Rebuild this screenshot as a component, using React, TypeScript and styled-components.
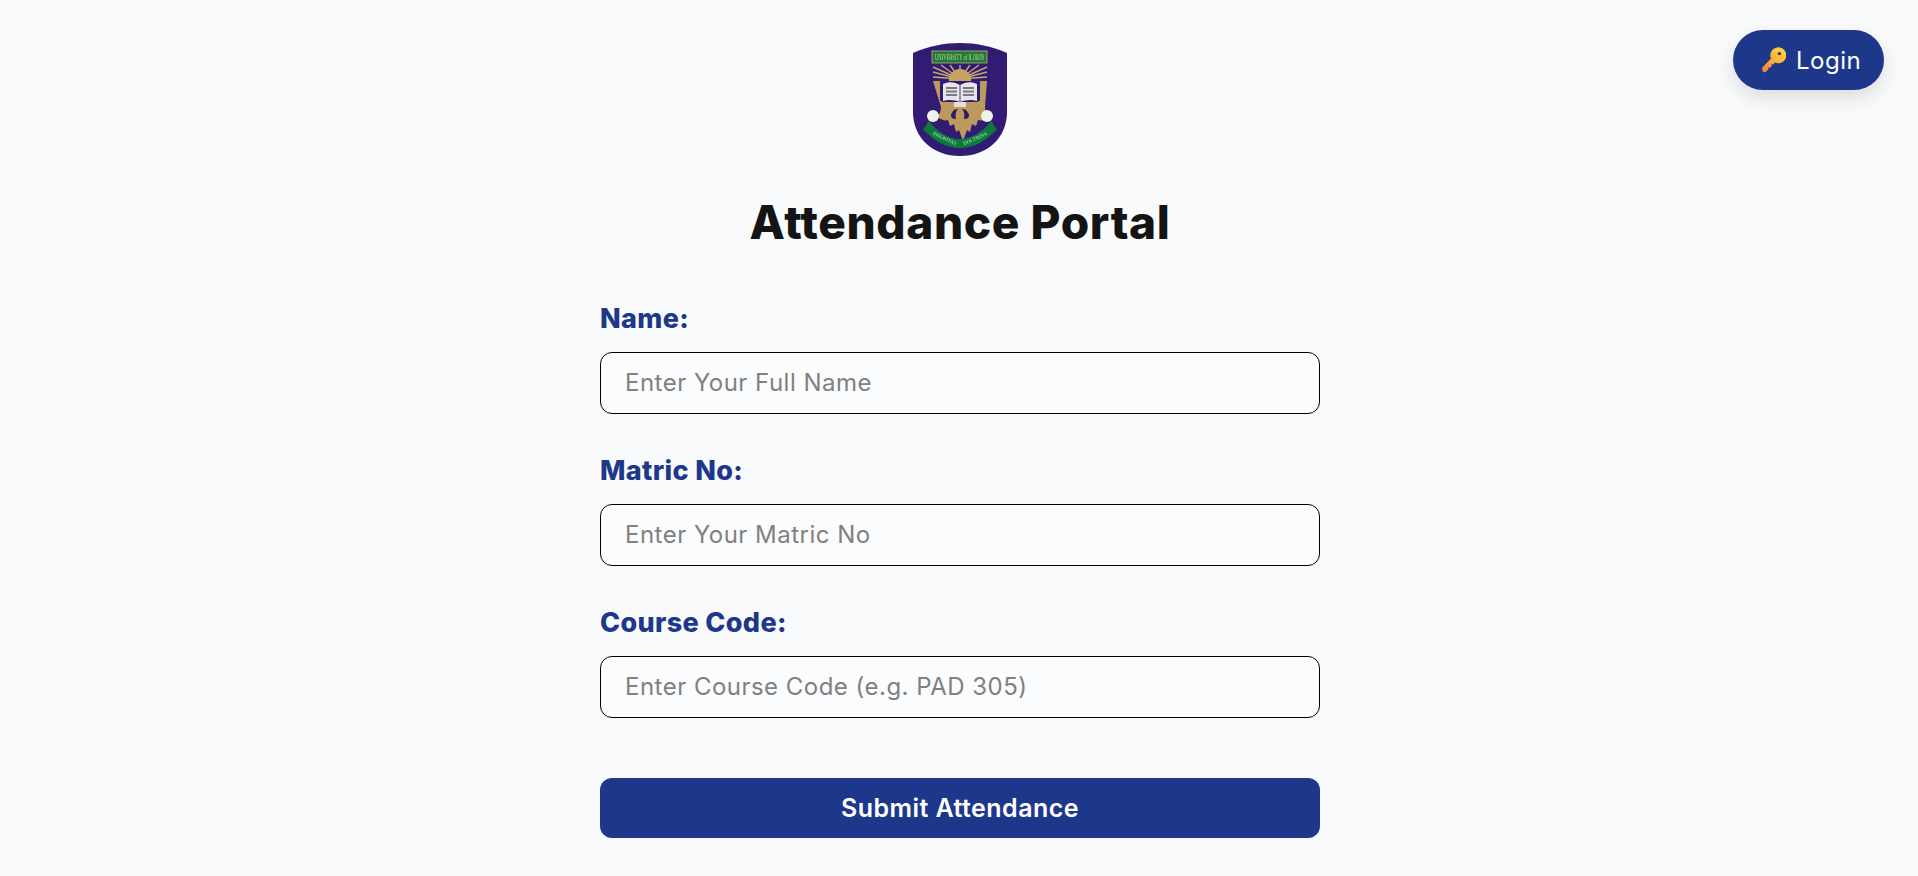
import React from "react";
import styled, { createGlobalStyle } from "styled-components";

const Global = createGlobalStyle`
  html, body { margin: 0; padding: 0; background: #f9fafc; }
  body { font-family: Inter, "Liberation Sans", sans-serif; }
  * { box-sizing: border-box; }
`;

const Page = styled.main`
  position: relative;
  height: 876px;
  overflow: hidden;
  display: flex;
  flex-direction: column;
  align-items: center;
  padding: 43px 0 0 2px;
`;

const LoginButton = styled.button`
  position: absolute;
  top: 30px;
  right: 34px;
  width: 151px;
  height: 60px;
  padding: 0 0 0 27px;
  display: flex;
  align-items: center;
  justify-content: flex-start;
  gap: 10px;
  border: 0;
  border-radius: 30px;
  background: #1d378b;
  color: #fff;
  font: 400 24px Inter, sans-serif;
  letter-spacing: 0.5px;
  box-shadow: 0 8px 20px rgba(0, 0, 0, 0.12);
`;

const Title = styled.h1`
  margin: 32px 0 0;
  height: 68px;
  line-height: 68px;
  font-size: 46px;
  font-weight: 800;
  color: #141414;
  letter-spacing: 0.6px;
`;

const Form = styled.form`
  width: 720px;
  display: flex;
  flex-direction: column;
  margin-top: 48px;
`;

const Field = styled.div`
  display: flex;
  flex-direction: column;
  gap: 18px;
  margin-bottom: 42px;
`;

const Label = styled.label`
  height: 30px;
  line-height: 30px;
  font-size: 27px;
  font-weight: 800;
  letter-spacing: 0.35px;
  color: #1d378b;
`;

const Input = styled.input`
  width: 720px;
  height: 62px;
  padding: 0 24px 2px;
  border: 1px solid #000;
  border-radius: 12px;
  background: #fbfcfe;
  font: 400 24px Inter, sans-serif;
  letter-spacing: 0.48px;
  outline: none;
  &::placeholder { color: #808080; opacity: 1; }
`;

const Submit = styled.button`
  margin-top: 18px;
  height: 60px;
  border: 0;
  border-radius: 12px;
  background: #1d378b;
  color: #fff;
  font: 600 25px Inter, sans-serif;
  letter-spacing: 0.45px;
`;

const KeyIcon = () => (
  <svg width="26" height="26" viewBox="0 0 26 26" aria-hidden="true">
    <defs>
      <linearGradient id="keyGrad" x1="1" y1="25" x2="24" y2="2" gradientUnits="userSpaceOnUse">
        <stop offset="0" stopColor="#f07f3c" />
        <stop offset="0.6" stopColor="#fcb53a" />
        <stop offset="1" stopColor="#ffd43b" />
      </linearGradient>
    </defs>
    <path
      d="M1.4 21.5 11 11.6a8 8 0 1 1 4 4l-2 2-1.6-.4.2 2-1.6 1.6-1.8-.4.2 1.9-2.2 2.2c-1 .9-2.2 1-3.2.2-1-1-1-2 0-3z"
      fill="url(#keyGrad)"
    />
    <circle cx="19.4" cy="6.6" r="1.7" fill="#1d378b" />
  </svg>
);

const Crest = () => (
  <svg width="94" height="113" viewBox="0 0 94 113" aria-hidden="true">
    <defs>
      <filter id="soft" x="-5%" y="-5%" width="110%" height="110%">
        <feGaussianBlur stdDeviation="0.35" />
      </filter>
    </defs>
    <g filter="url(#soft)">
      <path d="M0 10C16 3 31 0 47 0s31 3 47 10v59c0 26-20 44-47 44S0 95 0 69z" fill="#331a73" />
      <rect x="19" y="8" width="55" height="12" fill="#1a7a3a" stroke="#c2b070" strokeWidth="0.8" />
      <text transform="translate(46.5 17) scale(1 1.6)" textAnchor="middle" fontFamily="'Liberation Serif', serif" fontSize="4.6" fill="#d9d58c">
        UNIVERSITY of ILORIN
      </text>
      <g stroke="#c2a86c" strokeWidth="1.5">
        <path d="M47 36 20 24M47 36 20 29M47 36 20 34M47 36 28 22M47 36 37 22M47 36V22M47 36 57 22M47 36 66 22M47 36 74 24M47 36 74 29M47 36 74 34" />
      </g>
      <circle cx="47" cy="37" r="11" fill="#c8a460" />
      <path d="M20 38h7l2 21h36l2-21h7l-2 26c0 5 2 8 4 10-5 3-8 4-11 3l-2 6-4-2-2 8-3-2-4 11-4-11-3 2-2-8-4 2-2-6c-3 1-6 0-11-3 2-2 4-5 4-10z" fill="#bb9a5c" />
      <path d="M27 38h40v20H27z" fill="#2d1a72" />
      <path d="M30 41c6-3 12-2 17 1 5-3 11-4 17-1v17c-6-2-12-1-17 1-5-2-11-3-17-1z" fill="#e6e6e8" />
      <path d="M33 45h11M33 48.5h11M33 52h11M50 45h11M50 48.5h11M50 52h11" stroke="#7b7882" strokeWidth="1.8" />
      <path d="M47 42v17" stroke="#3a3358" strokeWidth="0.9" />
      <path d="M41 59h12v5H41z" fill="#e4e1d9" />
      <path d="M38 72c1-4 4-6 7-6-2 2-3 5-2 10-3 0-5-1-5-4zM56 72c-1-4-4-6-7-6 2 2 3 5 2 10 3 0 5-1 5-4z" fill="#2a1a66" />
      <ellipse cx="20" cy="73" rx="6" ry="6" fill="#eef0ea" />
      <ellipse cx="74" cy="73" rx="6" ry="6" fill="#eef0ea" />
      <path d="M10 87l6-9c8 11 20 18 31 18s23-7 31-18l6 9-4 3c-9 9-21 15-33 15s-24-6-33-15z" fill="#0f7a3c" />
      <text transform="translate(31 97) rotate(24)" textAnchor="middle" fontFamily="'Liberation Serif', serif" fontSize="5" fill="#bfe0c6">PRIORITAS</text>
      <text transform="translate(63 97) rotate(-24)" textAnchor="middle" fontFamily="'Liberation Serif', serif" fontSize="5" fill="#bfe0c6">DOCTRINA</text>
    </g>
  </svg>
);

const fields = [
  { label: "Name:", placeholder: "Enter Your Full Name" },
  { label: "Matric No:", placeholder: "Enter Your Matric No" },
  { label: "Course Code:", placeholder: "Enter Course Code (e.g. PAD 305)" },
];

export default function App() {
  return (
    <Page>
      <Global />
      <LoginButton type="button">
        <KeyIcon />
        Login
      </LoginButton>
      <Crest />
      <Title>Attendance Portal</Title>
      <Form onSubmit={(e) => e.preventDefault()}>
        {fields.map((f) => (
          <Field key={f.label}>
            <Label>{f.label}</Label>
            <Input placeholder={f.placeholder} />
          </Field>
        ))}
        <Submit type="submit">Submit Attendance</Submit>
      </Form>
    </Page>
  );
}
